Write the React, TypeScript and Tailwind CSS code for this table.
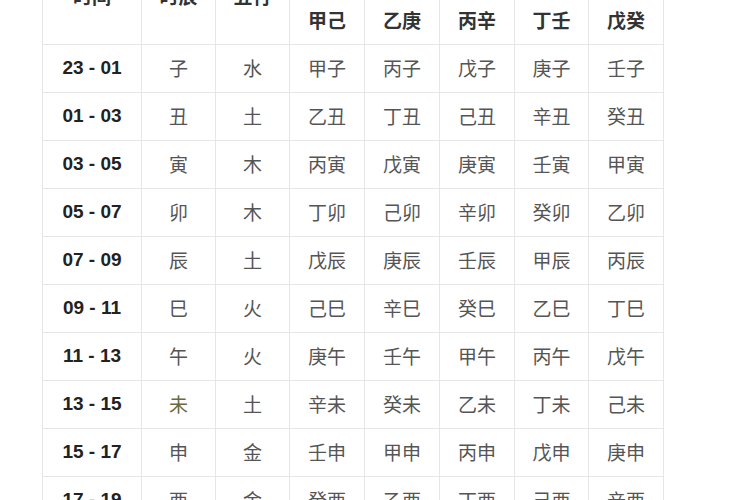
const rows: [string, string, string, string[]][] = [
  ['23 - 01', '子', '水', ['甲子', '丙子', '戊子', '庚子', '壬子']],
  ['01 - 03', '丑', '土', ['乙丑', '丁丑', '己丑', '辛丑', '癸丑']],
  ['03 - 05', '寅', '木', ['丙寅', '戊寅', '庚寅', '壬寅', '甲寅']],
  ['05 - 07', '卯', '木', ['丁卯', '己卯', '辛卯', '癸卯', '乙卯']],
  ['07 - 09', '辰', '土', ['戊辰', '庚辰', '壬辰', '甲辰', '丙辰']],
  ['09 - 11', '巳', '火', ['己巳', '辛巳', '癸巳', '乙巳', '丁巳']],
  ['11 - 13', '午', '火', ['庚午', '壬午', '甲午', '丙午', '戊午']],
  ['13 - 15', '未', '土', ['辛未', '癸未', '乙未', '丁未', '己未']],
  ['15 - 17', '申', '金', ['壬申', '甲申', '丙申', '戊申', '庚申']],
  ['17 - 19', '酉', '金', ['癸酉', '乙酉', '丁酉', '己酉', '辛酉']],
];

const stems = ['甲己', '乙庚', '丙辛', '丁壬', '戊癸'];

const cjk = "font-['Noto_Sans_CJK_SC',sans-serif]";

export default function App() {
  return (
    <div className="h-[500px] w-[750px] overflow-hidden bg-white pl-[42px]">
      <table className={`-mt-[52px] w-[622px] table-fixed border-collapse ${cjk}`}>
        <colgroup>
          <col className="w-[99px]" />
          <col className="w-[74px]" />
          <col className="w-[74px]" />
          <col className="w-[75px]" />
          <col className="w-[75px]" />
          <col className="w-[75px]" />
          <col className="w-[74px]" />
          <col className="w-[75px]" />
        </colgroup>
        <thead>
          <tr className="h-[48px]">
            {['时间', '时辰', '五行'].map((h) => (
              <th key={h} rowSpan={2} className="border border-[#e6e6e6] text-[19px] font-bold text-[#333]">
                {h}
              </th>
            ))}
            <th colSpan={5} className="border border-[#e6e6e6] text-[19px] font-bold text-[#333]">
              日干
            </th>
          </tr>
          <tr className="h-[48px]">
            {stems.map((s) => (
              <th key={s} className="border border-[#e6e6e6] text-[19px] font-bold text-[#333]">
                {s}
              </th>
            ))}
          </tr>
        </thead>
        <tbody>
          {rows.map(([time, branch, element, pillars]) => (
            <tr key={time} className="h-[48px]">
              <td className="border border-[#e6e6e6] text-center font-['Liberation_Sans',sans-serif] text-[19px] font-bold text-[#222]">
                {time}
              </td>
              <td className={`border border-[#e6e6e6] text-center text-[19px] ${branch === '未' ? 'text-[#6a6a3c]' : 'text-[#555]'}`}>
                {branch}
              </td>
              <td className="border border-[#e6e6e6] text-center text-[19px] text-[#555]">{element}</td>
              {pillars.map((p) => (
                <td key={p} className="border border-[#e6e6e6] text-center text-[19px] text-[#555]">
                  {p}
                </td>
              ))}
            </tr>
          ))}
        </tbody>
      </table>
    </div>
  );
}
